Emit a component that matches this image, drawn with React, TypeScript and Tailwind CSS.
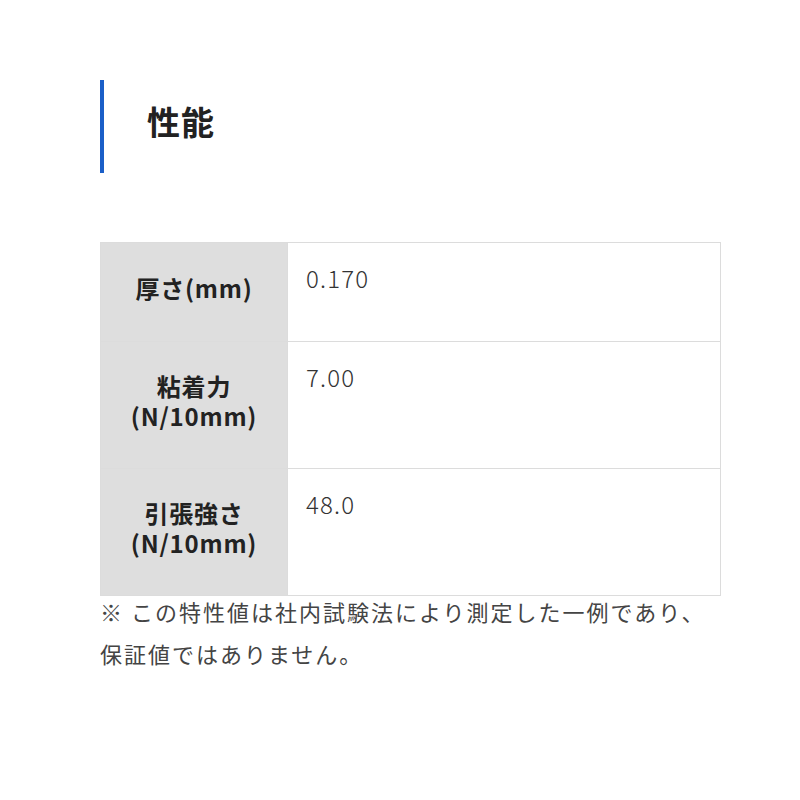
const rows = [
  { label: ["厚さ(mm)"], value: "0.170", h: "h-[98px]" },
  { label: ["粘着力", "(N/10mm)"], value: "7.00", h: "h-[127px]" },
  { label: ["引張強さ", "(N/10mm)"], value: "48.0", h: "h-[127px]" },
];

export default function App() {
  return (
    <div
      className="min-h-[800px] w-[800px] bg-white pl-[100px] pt-[80px] text-[#222]"
      style={{ fontFamily: '"Noto Sans CJK JP", "Noto Sans", sans-serif' }}
    >
      <div className="flex h-[93px] items-center border-l-[4px] border-[#1a5fc8] pb-[10px] pl-[43px]">
        <h2 className="text-[33px] font-bold leading-none tracking-[1px]">性能</h2>
      </div>

      <div className="mt-[69px] w-[621px] border border-[#dcdcdc]">
        {rows.map((r, i) => (
          <div
            key={i}
            className={`flex ${r.h} ${i > 0 ? "border-t border-[#dcdcdc]" : ""}`}
          >
            <div className="flex w-[186px] shrink-0 flex-col items-center justify-center bg-[#dedede] pb-[8px] text-[24px] font-bold leading-[30px] tracking-[0.8px]">
              {r.label.map((l) => (
                <span key={l}>{l}</span>
              ))}
            </div>
            <div className="flex-1 border-l border-[#dcdcdc] pl-[18px] pt-[20px] text-[24px] font-light leading-[30px] tracking-[1.2px] text-[#333]">
              {r.value}
            </div>
          </div>
        ))}
      </div>

      <p className="-mt-[6px] w-[640px] text-[22px] leading-[42px] tracking-[2px] text-[#444]">
        ※ この特性値は社内試験法により測定した一例であり、
        <br />
        保証値ではありません。
      </p>
    </div>
  );
}
